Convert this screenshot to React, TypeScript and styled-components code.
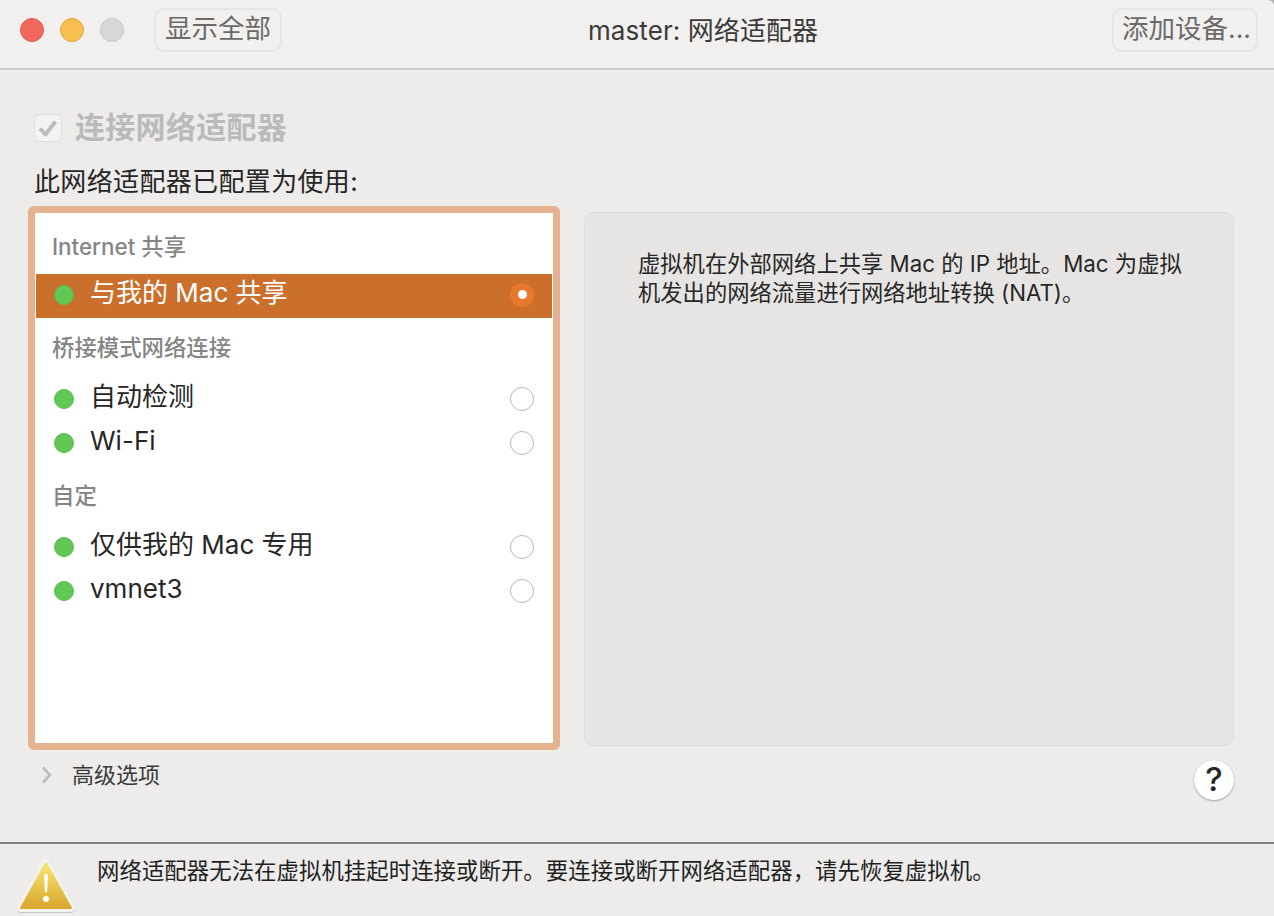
import React from "react";
import styled, { createGlobalStyle } from "styled-components";

const Global = createGlobalStyle`
  html, body { margin: 0; padding: 0; height: 100%; background: #ecebea; }
  #root { height: 916px; }
  * { box-sizing: border-box; }
`;

const FONT = `Inter, "Noto Sans CJK SC", sans-serif`;

const Window = styled.div`
  width: 1274px;
  height: 916px;
  display: flex;
  flex-direction: column;
  overflow: hidden;
  background: #b4b3b2;
  font-family: ${FONT};
  color: #262626;
`;

const TitleBar = styled.header`
  height: 70px;
  flex: none;
  display: flex;
  align-items: flex-start;
  padding: 8px 16px 0 20px;
  background: #f1f0ef;
  border-bottom: 2px solid #cfcecd;
  border-top-right-radius: 6px;
  position: relative;
`;

const Light = styled.span<{ $fill: string; $edge: string }>`
  width: 24px;
  height: 24px;
  margin: 10px 16px 0 0;
  border-radius: 50%;
  background: ${(p) => p.$fill};
  border: 1px solid ${(p) => p.$edge};
  flex: none;
`;

const ToolButton = styled.button`
  height: 44px;
  padding: 0 5px 3px 7px;
  background: #f1f0ef;
  border: 2px solid #e6e5e4;
  border-radius: 10px;
  font: 400 26.5px/1 ${FONT};
  color: #6b6a69;
  white-space: nowrap;
`;

const ShowAll = styled(ToolButton)`
  margin-left: 14px;
  padding: 0 9px 3px;
`;

const AddDevice = styled(ToolButton)`
  padding: 0 5px 3px 8px;
`;

const WindowTitle = styled.h1`
  position: absolute;
  left: 588px;
  top: 15px;
  margin: 0;
  font: 400 26px/32px ${FONT};
  letter-spacing: 0.08px;
  color: #3b3a39;
  white-space: nowrap;
`;

const Spacer = styled.div`
  flex: 1;
`;

const Content = styled.main`
  flex: 1;
  display: flex;
  flex-direction: column;
  padding: 40px 40px 0 28px;
  background: #edeceb;
`;

const CheckRow = styled.label`
  display: flex;
  align-items: center;
  gap: 13px;
  height: 36px;
  padding-left: 6px;
`;

const CheckBox = styled.span`
  width: 28px;
  height: 28px;
  display: flex;
  align-items: center;
  justify-content: center;
  background: #f4f3f2;
  border: 1px solid #dedddc;
  border-radius: 6px;
`;

const CheckLabel = styled.span`
  margin-top: -2px;
  font: 700 30px/36px ${FONT};
  color: #bbbaba;
  letter-spacing: 0.3px;
`;

const Caption = styled.div`
  margin: 20px 0 8px 6px;
  font: 400 26px/32px ${FONT};
  color: #262626;
  letter-spacing: 0.35px;
`;

const Columns = styled.div`
  display: flex;
  align-items: flex-start;
  gap: 24px;
`;

const ListFrame = styled.section`
  width: 532px;
  height: 544px;
  flex: none;
  background: #fff;
  border: 7px solid #e6b18e;
  border-radius: 6px;
  padding-top: 16px;
`;

const GroupHead = styled.div<{ $gap?: number }>`
  height: 45px;
  margin-top: ${(p) => p.$gap ?? 0}px;
  padding-left: 17px;
  font: 500 22.4px/36px ${FONT};
  color: #858585;
`;

const Row = styled.div<{ $active?: boolean }>`
  height: 44px;
  display: flex;
  align-items: center;
  margin-left: ${(p) => (p.$active ? "1px" : "0")};
  margin-right: 1px;
  padding: 0 18px ${(p) => (p.$active ? "6px" : "0")} ${(p) => (p.$active ? "18px" : "19px")};
  background: ${(p) => (p.$active ? "#cb6f2c" : "transparent")};
  color: ${(p) => (p.$active ? "#fff" : "#262626")};
`;

const Dot = styled.span`
  width: 20px;
  height: 20px;
  flex: none;
  margin-top: 3px;
  border-radius: 50%;
  background: #62c755;
  border: 1px solid #5bbd4f;
`;

const RowLabel = styled.span`
  flex: 1;
  margin-left: 16px;
  font: 400 26px/34px ${FONT};
`;

const Radio = styled.span<{ $on?: boolean }>`
  width: 24px;
  height: 24px;
  flex: none;
  margin-top: 3px;
  border-radius: 50%;
  display: flex;
  align-items: center;
  justify-content: center;
  background: ${(p) => (p.$on ? "#e8782c" : "#fff")};
  border: ${(p) => (p.$on ? "none" : "1px solid #b9b9b9")};
  &::after {
    content: "";
    display: ${(p) => (p.$on ? "block" : "none")};
    width: 9px;
    height: 9px;
    border-radius: 50%;
    background: #fff;
  }
`;

const InfoPanel = styled.aside`
  margin-top: 6px;
  width: 650px;
  height: 534px;
  padding: 36px 48px 0 53px;
  background: #e6e5e4;
  border: 1px solid #dddcdb;
  border-radius: 10px;
  font: 400 22.3px/29px ${FONT};
  color: #262626;
`;

const BelowRow = styled.div`
  display: flex;
  align-items: flex-start;
  justify-content: space-between;
  padding-left: 12px;
`;

const Disclosure = styled.div`
  display: flex;
  align-items: center;
  margin-top: 9px;
  font: 400 22px/32px ${FONT};
  color: #3a3a3a;
`;

const Chevron = styled.svg`
  width: 14px;
  height: 20px;
  margin-right: 18px;
  flex: none;
`;

const HelpButton = styled.button`
  width: 40px;
  height: 40px;
  margin: 10px 0 0 0;
  padding: 0 0 2px;
  border: none;
  border-radius: 50%;
  background: #fff;
  box-shadow: 0 1px 2px rgba(0, 0, 0, 0.3), 0 0 1px rgba(0, 0, 0, 0.2);
  font: 500 33px/1 ${FONT};
  color: #262626;
`;

const Footer = styled.footer`
  height: 74px;
  flex: none;
  display: flex;
  align-items: flex-start;
  padding: 11px 0 0 16px;
  border-top: 2px solid #82817f;
  background: #edeceb;
  overflow: hidden;
`;

const WarnIcon = styled.svg`
  width: 60px;
  height: 56px;
  margin-top: 3px;
  flex: none;
`;

const FooterText = styled.div`
  margin-left: 21px;
  font: 400 22.4px/32px ${FONT};
  letter-spacing: 0.05px;
  color: #1f1f1f;
  white-space: nowrap;
`;

const Item = ({ label, active }: { label: string; active?: boolean }) => (
  <Row $active={active}>
    <Dot />
    <RowLabel>{label}</RowLabel>
    <Radio $on={active} />
  </Row>
);

export default function App() {
  return (
    <Window>
      <Global />
      <TitleBar>
        <Light $fill="#f0675d" $edge="#dd5a50" />
        <Light $fill="#f6bf4f" $edge="#e0a83e" />
        <Light $fill="#d8d7d6" $edge="#c4c3c2" />
        <ShowAll>显示全部</ShowAll>
        <WindowTitle>master: 网络适配器</WindowTitle>
        <Spacer />
        <AddDevice>添加设备...</AddDevice>
      </TitleBar>
      <Content>
        <CheckRow>
          <CheckBox>
            <svg width="20" height="20" viewBox="0 0 20 20" fill="none">
              <path d="M2 10.5 L7.5 16.5 L17.5 3.5" stroke="#bcbbbb" strokeWidth="3.8" strokeLinejoin="round" />
            </svg>
          </CheckBox>
          <CheckLabel>连接网络适配器</CheckLabel>
        </CheckRow>
        <Caption>此网络适配器已配置为使用:</Caption>
        <Columns>
          <ListFrame>
            <GroupHead>Internet 共享</GroupHead>
            <Item label="与我的 Mac 共享" active />
            <GroupHead $gap={12}>桥接模式网络连接</GroupHead>
            <Item label="自动检测" />
            <Item label="Wi-Fi" />
            <GroupHead $gap={15}>自定</GroupHead>
            <Item label="仅供我的 Mac 专用" />
            <Item label="vmnet3" />
          </ListFrame>
          <InfoPanel>
            虚拟机在外部网络上共享 Mac 的 IP 地址。Mac 为虚拟
            <br />
            机发出的网络流量进行网络地址转换 (NAT)。
          </InfoPanel>
        </Columns>
        <BelowRow>
          <Disclosure>
            <Chevron viewBox="0 0 14 20" fill="none">
              <path d="M3 2.5 L10 10 L3 17.5" stroke="#bdbcbc" strokeWidth="2.6" />
            </Chevron>
            高级选项
          </Disclosure>
          <HelpButton>?</HelpButton>
        </BelowRow>
      </Content>
      <Footer>
        <WarnIcon viewBox="0 0 60 56">
          <defs>
            <linearGradient id="warnFill" x1="0" y1="0" x2="0" y2="1">
              <stop offset="0" stopColor="#f8e772" />
              <stop offset="1" stopColor="#d9a72e" />
            </linearGradient>
          </defs>
          <path d="M30 6 L55 51 H5 Z" fill="#c9c7c3" stroke="#c9c7c3" strokeWidth="8" strokeLinejoin="round" />
          <path d="M30 5 L55 50 H5 Z" fill="#f4f2ee" stroke="#f4f2ee" strokeWidth="8" strokeLinejoin="round" />
          <path d="M30 5 L55 50 H5 Z" fill="url(#warnFill)" stroke="url(#warnFill)" strokeWidth="2" strokeLinejoin="round" />
          <path d="M28 17 Q30 14.5 32 17 L31 34 Q30 35.5 29 34 Z" fill="#fff" />
          <circle cx="30" cy="41" r="3" fill="#fff" />
        </WarnIcon>
        <FooterText>网络适配器无法在虚拟机挂起时连接或断开。要连接或断开网络适配器，请先恢复虚拟机。</FooterText>
      </Footer>
    </Window>
  );
}
